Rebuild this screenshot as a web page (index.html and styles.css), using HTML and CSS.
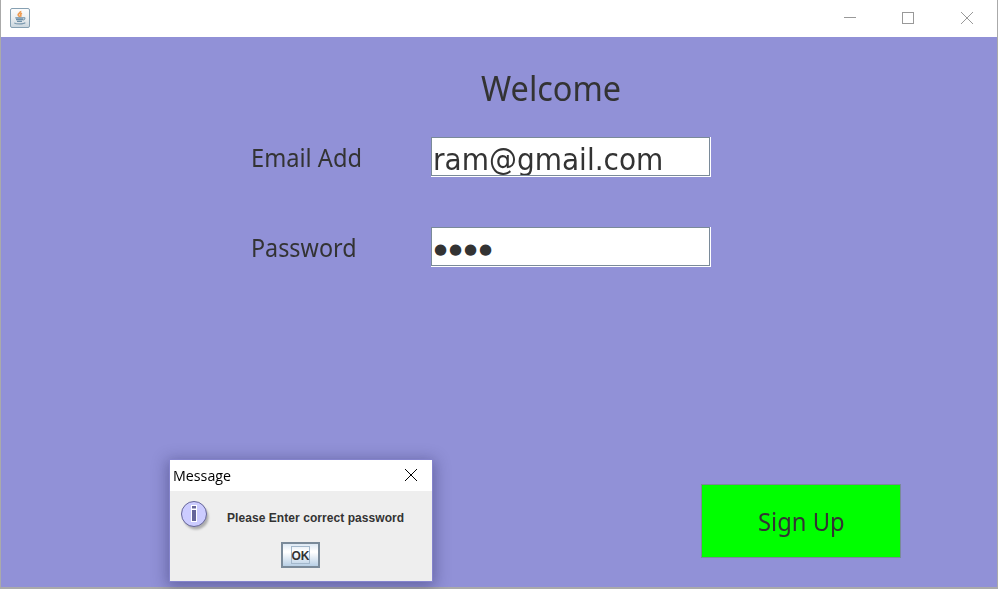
FILE: index.html
```
<!DOCTYPE html>
<html lang="en">
<head>
<meta charset="utf-8">
<title>Welcome</title>
<link rel="stylesheet" href="styles.css">
</head>
<body>
<div class="window">
  <header class="titlebar">
    <svg class="app-icon" width="20" height="20" viewBox="0 0 20 20">
      <defs><linearGradient id="cup" x1="0" y1="0" x2="0" y2="1"><stop offset="0" stop-color="#fdfdfd"/><stop offset=".5" stop-color="#eceff1"/><stop offset="1" stop-color="#c9d5dd"/></linearGradient></defs>
      <rect x=".5" y=".5" width="19" height="19" rx="1.5" fill="url(#cup)" stroke="#86a0b2"/>
      <path d="M10.600 3c.5 1.700-3 2.500-2.400 4 .3.800 1.300 1.100 1 2M12 5.300c-1.800.8-1.800 1.500-1.200 2.200.3.600-.1 1-.5 1.300" fill="none" stroke="#ee9a50" stroke-width="1.700"/>
      <path d="M5.300 9.800h8.200M6 11.500h7M7 13.300h5" fill="none" stroke="#6d8fa8" stroke-width="1.300"/>
      <path d="M13.300 9.600c2.400-.4 2 2-.4 2.600M4.300 14.800c1.500 1.500 9.500 1.500 11-.2" fill="none" stroke="#7d9bb0" stroke-width="1.200"/>
    </svg>
    <svg class="controls" width="132" height="14" viewBox="0 0 132 14" fill="none" stroke="#999">
      <path d="M0 6.500h12"/>
      <rect x="58.500" y="1.500" width="11" height="11"/>
      <path d="M117 1l12 12M129 1l-12 12"/>
    </svg>
  </header>
  <main class="content">
    <h1 class="title"><span class="t-welcome">Welcome</span></h1>
    <div class="form">
      <label class="label"><span class="t-email">Email Add</span></label>
      <div class="field"><div class="field-inner"><span class="t-value">ram@gmail.com</span></div></div>
      <label class="label"><span class="t-password">Password</span></label>
      <div class="field"><div class="field-inner"><span class="dots">●●●●</span></div></div>
    </div>
    <button class="signup"><span class="t-signup">Sign Up</span></button>
  </main>
</div>
<div class="dialog">
  <div class="dialog-bar">
    <span class="dialog-title">Message</span>
    <svg class="dialog-close" width="14" height="14" viewBox="0 0 14 14" stroke="#000"><path d="M1 1l12 12M13 1L1 13"/></svg>
  </div>
  <div class="dialog-body">
    <svg class="info" width="32" height="32" viewBox="0 0 32 32">
      <defs><filter id="blur"><feGaussianBlur stdDeviation="1.300"/></filter></defs>
      <circle cx="16" cy="17" r="12.500" fill="#777" opacity=".55" filter="url(#blur)"/>
      <circle cx="14" cy="14" r="12.500" fill="#ccf" stroke="#669"/>
      <path d="M11 5h6v4h-6zM11 9h6v13h-6z" fill="#fff"/>
      <path d="M12 6h4v2.500h-4zM12 10h4v11h-4z" fill="#669"/>
    </svg>
    <p class="message"><span class="t-message">Please Enter correct password</span></p>
    <button class="ok"><span class="ok-focus">OK</span></button>
  </div>
</div>
</body>
</html>
```
FILE: styles.css
```
* { box-sizing: border-box; }
body {
  margin: 0;
  width: 998px;
  height: 589px;
  overflow: hidden;
  background: #aaa;
  color: #333;
  font-family: "DejaVu Sans Condensed", "DejaVu Sans", sans-serif;
}
.window {
  width: 996px;
  height: 587px;
  margin-left: 1px;
  display: flex;
  flex-direction: column;
}
.titlebar {
  height: 37px;
  flex: none;
  background: #fff;
  display: flex;
  justify-content: space-between;
  align-items: flex-start;
  padding: 8px 21px 0 9px;
}
.controls { margin-top: 3px; }
.content {
  flex: 1;
  background: #9191d7;
  display: flex;
  flex-direction: column;
  padding: 30px 96px 0 250px;
}
.content span, .dialog-title { display: inline-block; transform-origin: 0 50%; white-space: nowrap; }
.content .t-welcome { transform: scaleX(.928); }
.content .t-email { transform: scaleX(.945); }
.content .t-password { transform: scaleX(.933); }
.content .t-value { transform: scaleX(.933); }
.content .t-signup { transform: scaleX(.95); }
.dialog-title { transform: scaleX(.95); }
.title {
  margin: 0 0 0 230px;
  font: 400 35px/42px "Noto Sans", sans-serif;
}
.form {
  display: grid;
  grid-template-columns: 180px 280px;
  row-gap: 50px;
  margin-top: 28px;
}
.label { font: 25px/40px "Noto Sans", sans-serif; }
.field {
  height: 40px;
  background: #fff;
  padding: 0 1px 1px 0;
}
.field-inner {
  height: 39px;
  border: 1px solid #7a8a99;
  padding-left: 1px;
  overflow: hidden;
  font: 30px/43px "DejaVu Sans", sans-serif;
}
.field-inner .dots {
  padding-left: 1px;
  font-size: 15px;
  letter-spacing: 1.900px;
  line-height: 43px;
  vertical-align: top;
}
.signup {
  align-self: flex-end;
  width: 200px;
  height: 74px;
  margin-top: 217px;
  padding: 0 0 0 56px;
  text-align: left;
  border: 1px solid #7a8a99;
  background: #0f0;
  color: #333;
  font: 25px/72px "Noto Sans", sans-serif;
}
.dialog {
  position: absolute;
  left: 169px;
  top: 459px;
  width: 264px;
  height: 123px;
  border: 1px solid #8483cc;
  background: #eee;
  box-shadow: 0 3px 14px 2px rgba(30, 30, 80, .38);
}
.dialog-bar {
  height: 31px;
  background: #fff;
  display: flex;
  justify-content: space-between;
  align-items: flex-start;
  padding: 0 14px 0 3px;
  color: #000;
  font: 15px/31px "Open Sans", sans-serif;
}
.dialog-close { margin-top: 8px; }
.dialog-body {
  display: grid;
  grid-template-columns: 47px 1fr;
  grid-template-rows: 51px 26px;
  padding-left: 10px;
}
.info { margin-top: 9px; }
.message {
  margin: 0;
  color: #333;
  font: bold 12px/55px "Liberation Sans", sans-serif;
  letter-spacing: .06px;
}
.ok {
  grid-column: 1 / 3;
  width: 39px;
  height: 26px;
  margin-left: 101px;
  padding: 0;
  display: flex;
  align-items: center;
  justify-content: center;
  border: 2px solid #7a8a99;
  background: linear-gradient(#dde8f3 0, #fff 32%, #fff 38%, #b8cfe5 100%);
  color: #333;
  font: bold 12px/18px "Liberation Sans", sans-serif;
}
.ok-focus {
  width: 19px;
  height: 18px;
  border: 1px solid #a3b8cc;
  display: flex;
  justify-content: center;
}
```
